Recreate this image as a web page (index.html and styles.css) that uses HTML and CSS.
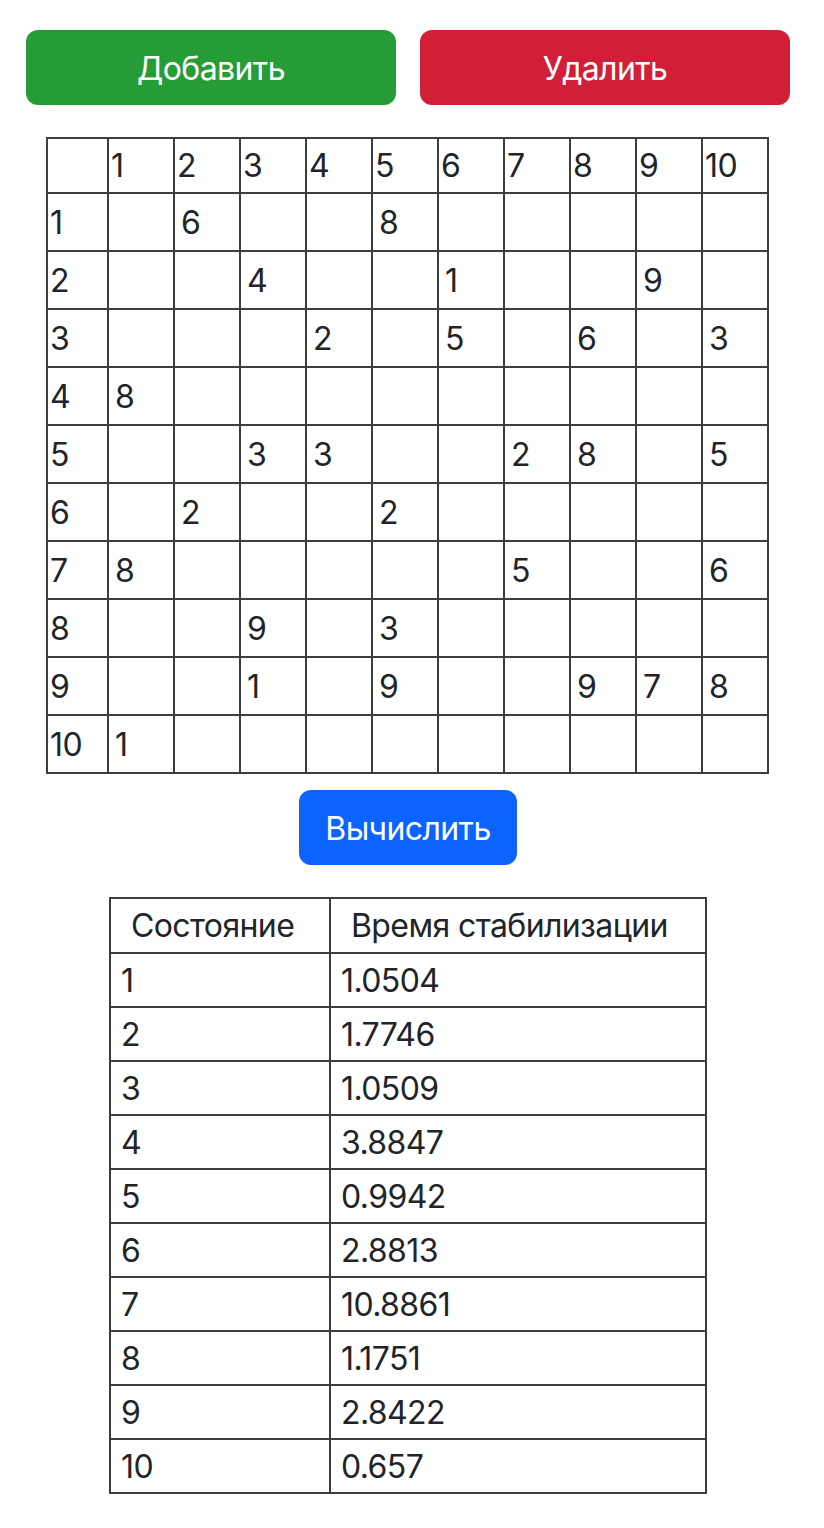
FILE: index.html
```html
<!DOCTYPE html>
<html lang="ru">
<head>
<meta charset="utf-8">
<title>Матрица</title>
<link rel="stylesheet" href="styles.css">
</head>
<body>
<div class="page">
  <div class="actions">
    <button class="btn btn-success">Добавить</button>
    <button class="btn btn-danger">Удалить</button>
  </div>

  <table class="matrix">
    <thead>
      <tr><th class="corner"></th><th>1</th><th>2</th><th>3</th><th>4</th><th>5</th><th>6</th><th>7</th><th>8</th><th>9</th><th>10</th></tr>
    </thead>
    <tbody>
      <tr><th>1</th><td></td><td>6</td><td></td><td></td><td>8</td><td></td><td></td><td></td><td></td><td></td></tr>
      <tr><th>2</th><td></td><td></td><td>4</td><td></td><td></td><td>1</td><td></td><td></td><td>9</td><td></td></tr>
      <tr><th>3</th><td></td><td></td><td></td><td>2</td><td></td><td>5</td><td></td><td>6</td><td></td><td>3</td></tr>
      <tr><th>4</th><td>8</td><td></td><td></td><td></td><td></td><td></td><td></td><td></td><td></td><td></td></tr>
      <tr><th>5</th><td></td><td></td><td>3</td><td>3</td><td></td><td></td><td>2</td><td>8</td><td></td><td>5</td></tr>
      <tr><th>6</th><td></td><td>2</td><td></td><td></td><td>2</td><td></td><td></td><td></td><td></td><td></td></tr>
      <tr><th>7</th><td>8</td><td></td><td></td><td></td><td></td><td></td><td>5</td><td></td><td></td><td>6</td></tr>
      <tr><th>8</th><td></td><td></td><td>9</td><td></td><td>3</td><td></td><td></td><td></td><td></td><td></td></tr>
      <tr><th>9</th><td></td><td></td><td>1</td><td></td><td>9</td><td></td><td></td><td>9</td><td>7</td><td>8</td></tr>
      <tr><th>10</th><td>1</td><td></td><td></td><td></td><td></td><td></td><td></td><td></td><td></td><td></td></tr>
    </tbody>
  </table>

  <button class="btn btn-primary">Вычислить</button>

  <table class="results">
    <thead>
      <tr><th class="c1">Состояние</th><th class="c2">Время стабилизации</th></tr>
    </thead>
    <tbody>
      <tr><td>1</td><td>1.0504</td></tr>
      <tr><td>2</td><td>1.7746</td></tr>
      <tr><td>3</td><td>1.0509</td></tr>
      <tr><td>4</td><td>3.8847</td></tr>
      <tr><td>5</td><td>0.9942</td></tr>
      <tr><td>6</td><td>2.8813</td></tr>
      <tr><td>7</td><td>10.8861</td></tr>
      <tr><td>8</td><td>1.1751</td></tr>
      <tr><td>9</td><td>2.8422</td></tr>
      <tr><td>10</td><td>0.657</td></tr>
    </tbody>
  </table>
</div>
</body>
</html>
```

FILE: styles.css
```css
* { box-sizing: border-box; }

body {
  margin: 0;
  background: #ffffff;
  color: #212529;
  font-family: Inter, "Noto Sans", "DejaVu Sans", sans-serif;
  font-size: 32px;
  letter-spacing: -0.6px;
}

.page {
  width: 816px;
  padding-top: 30px;
  padding-bottom: 34px;
  display: flex;
  flex-direction: column;
  align-items: center;
}

.actions {
  width: 100%;
  padding: 0 26px;
  display: flex;
  gap: 24px;
}

.btn {
  height: 75px;
  border: 0;
  border-radius: 12px;
  color: #ffffff;
  font-family: inherit;
  font-size: 32px;
  font-weight: 400;
  letter-spacing: -0.6px;
  display: flex;
  align-items: center;
  justify-content: center;
  padding: 2px 24px 0;
  cursor: pointer;
}

.actions .btn { flex: 1 1 0; }

.btn-success { background: #269c37; }
.btn-danger { background: #d11f38; }
.btn-primary {
  background: #0d63fd;
  width: 218px;
  margin-top: 16px;
}

table {
  border-collapse: separate;
  border-spacing: 0;
  border-top: 2px solid #3d3d3d;
  border-left: 2px solid #3d3d3d;
}

th, td {
  border-right: 2px solid #3d3d3d;
  border-bottom: 2px solid #3d3d3d;
  font-weight: 400;
  text-align: left;
  vertical-align: middle;
  line-height: 38px;
  padding-top: 2px;
}

.matrix {
  align-self: flex-start;
  margin: 32px 0 0 46px;
  table-layout: fixed;
  width: 723px;
}

.matrix th, .matrix td {
  width: 66px;
  height: 58px;
  padding-left: 2px;
  padding-right: 2px;
}

.matrix td { padding-left: 6px; }

.matrix thead th { height: 55px; }
.matrix tbody th, .matrix .corner { width: 61px; }

.results {
  margin-top: 32px;
  table-layout: fixed;
  width: 598px;
}

.results th, .results td {
  height: 54px;
  padding-left: 10px;
  padding-right: 10px;
}

.results thead th {
  height: 55px;
  padding-left: 20px;
}

.results .c1 { width: 220px; }
.results .c2 { width: 376px; }
```
